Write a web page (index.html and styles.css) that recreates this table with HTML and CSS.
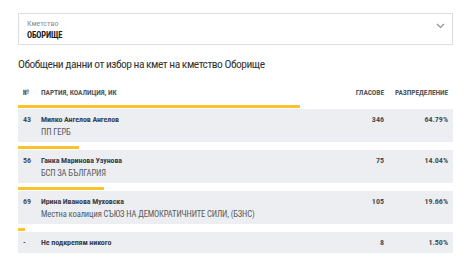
FILE: index.html
```html
<!DOCTYPE html>
<html lang="bg">
<head>
  <meta charset="UTF-8" />
  <title>Кметство Оборище</title>
  <link rel="stylesheet" href="styles.css">
</head>
<body>
  <div class="picker">
    <span class="picker-label">Кметство</span>
    <span class="picker-value">ОБОРИЩЕ</span>
    <svg class="picker-arrow" width="9" height="6" viewBox="0 0 9 6">
      <path d="M1 1l3.5 3.5L8 1" fill="none" stroke="#8a8f96" stroke-width="1.1"/>
    </svg>
  </div>

  <h2 class="title">Обобщени данни от избор на кмет на кметство Оборище</h2>

  <div class="results">
    <div class="head">
      <span class="num">№</span>
      <span class="name">ПАРТИЯ, КОАЛИЦИЯ, ИК</span>
      <span class="votes">ГЛАСОВЕ</span>
      <span class="share">РАЗПРЕДЕЛЕНИЕ</span>
    </div>

    <div class="entry">
      <div class="bar" style="width: 64.79%"></div>
      <div class="row">
        <span class="num">43</span>
        <div class="name">
          <b>Милко Ангелов Ангелов</b>
          <span class="party">ПП ГЕРБ</span>
        </div>
        <span class="votes">346</span>
        <span class="share">64.79%</span>
      </div>
    </div>

    <div class="entry">
      <div class="bar" style="width: 14.04%"></div>
      <div class="row">
        <span class="num">56</span>
        <div class="name">
          <b>Ганка Маринова Узунова</b>
          <span class="party">БСП ЗА БЪЛГАРИЯ</span>
        </div>
        <span class="votes">75</span>
        <span class="share">14.04%</span>
      </div>
    </div>

    <div class="entry">
      <div class="bar" style="width: 19.66%"></div>
      <div class="row">
        <span class="num">69</span>
        <div class="name">
          <b>Ирина Иванова Муховска</b>
          <span class="party">Местна коалиция СЪЮЗ НА ДЕМОКРАТИЧНИТЕ СИЛИ, (БЗНС)</span>
        </div>
        <span class="votes">105</span>
        <span class="share">19.66%</span>
      </div>
    </div>

    <div class="entry">
      <div class="bar" style="width: 1.5%"></div>
      <div class="row single">
        <span class="num">-</span>
        <div class="name">
          <b>Не подкрепям никого</b>
        </div>
        <span class="votes">8</span>
        <span class="share">1.50%</span>
      </div>
    </div>
  </div>
</body>
</html>
```

FILE: styles.css
```css
* { box-sizing: border-box; }
body {
  margin: 0; padding: 13px 17px 0 18px;
  background: #fff; color: #333;
  font-family: "Roboto Condensed", Roboto, sans-serif;
}

.picker {
  position: relative;
  height: 32px; border: 1px solid #dcdee1;
  padding: 5px 8px 0;
  display: flex; flex-direction: column;
}
.picker-label { font-size: 8px; line-height: 10px; color: #8b9096; }
.picker-value { font-size: 8.5px; line-height: 12px; font-weight: bold; color: #222; letter-spacing: -0.2px; }
.picker-arrow { position: absolute; top: 9px; right: 7px; }

.title {
  margin: 11px 0 0; font-weight: normal;
  font-size: 11.5px; line-height: 16px; color: #333;
  letter-spacing: -0.5px;
}

.results { margin-top: 14px; }

.head, .row {
  display: flex; align-items: flex-start;
  padding: 0 5px 0 5px;
}
.head {
  height: 12px; align-items: center;
  font-size: 7.5px; font-weight: bold; color: #555a60;
  letter-spacing: -0.1px;
}
.num { width: 18px; flex: none; }
.name { flex: 1; display: flex; flex-direction: column; }
.votes { width: 50px; flex: none; text-align: right; }
.share { width: 64px; flex: none; text-align: right; }

.entry { margin-top: 7px; }
.entry + .entry { margin-top: 4px; }
.bar { height: 3px; background: #f9c22e; margin-bottom: 1px; }

.row {
  background: #eceef1; height: 33px;
  padding-top: 5px;
  font-size: 8px; line-height: 12px; color: #4a4f55;
}
.row.single { height: 21px; padding-top: 5px; }
.row .num, .row .votes, .row .share, .row b { font-weight: bold; }
.row b { color: #3d4248; letter-spacing: -0.1px; }
.party { font-size: 8.5px; color: #555a60; letter-spacing: -0.1px; }
```
